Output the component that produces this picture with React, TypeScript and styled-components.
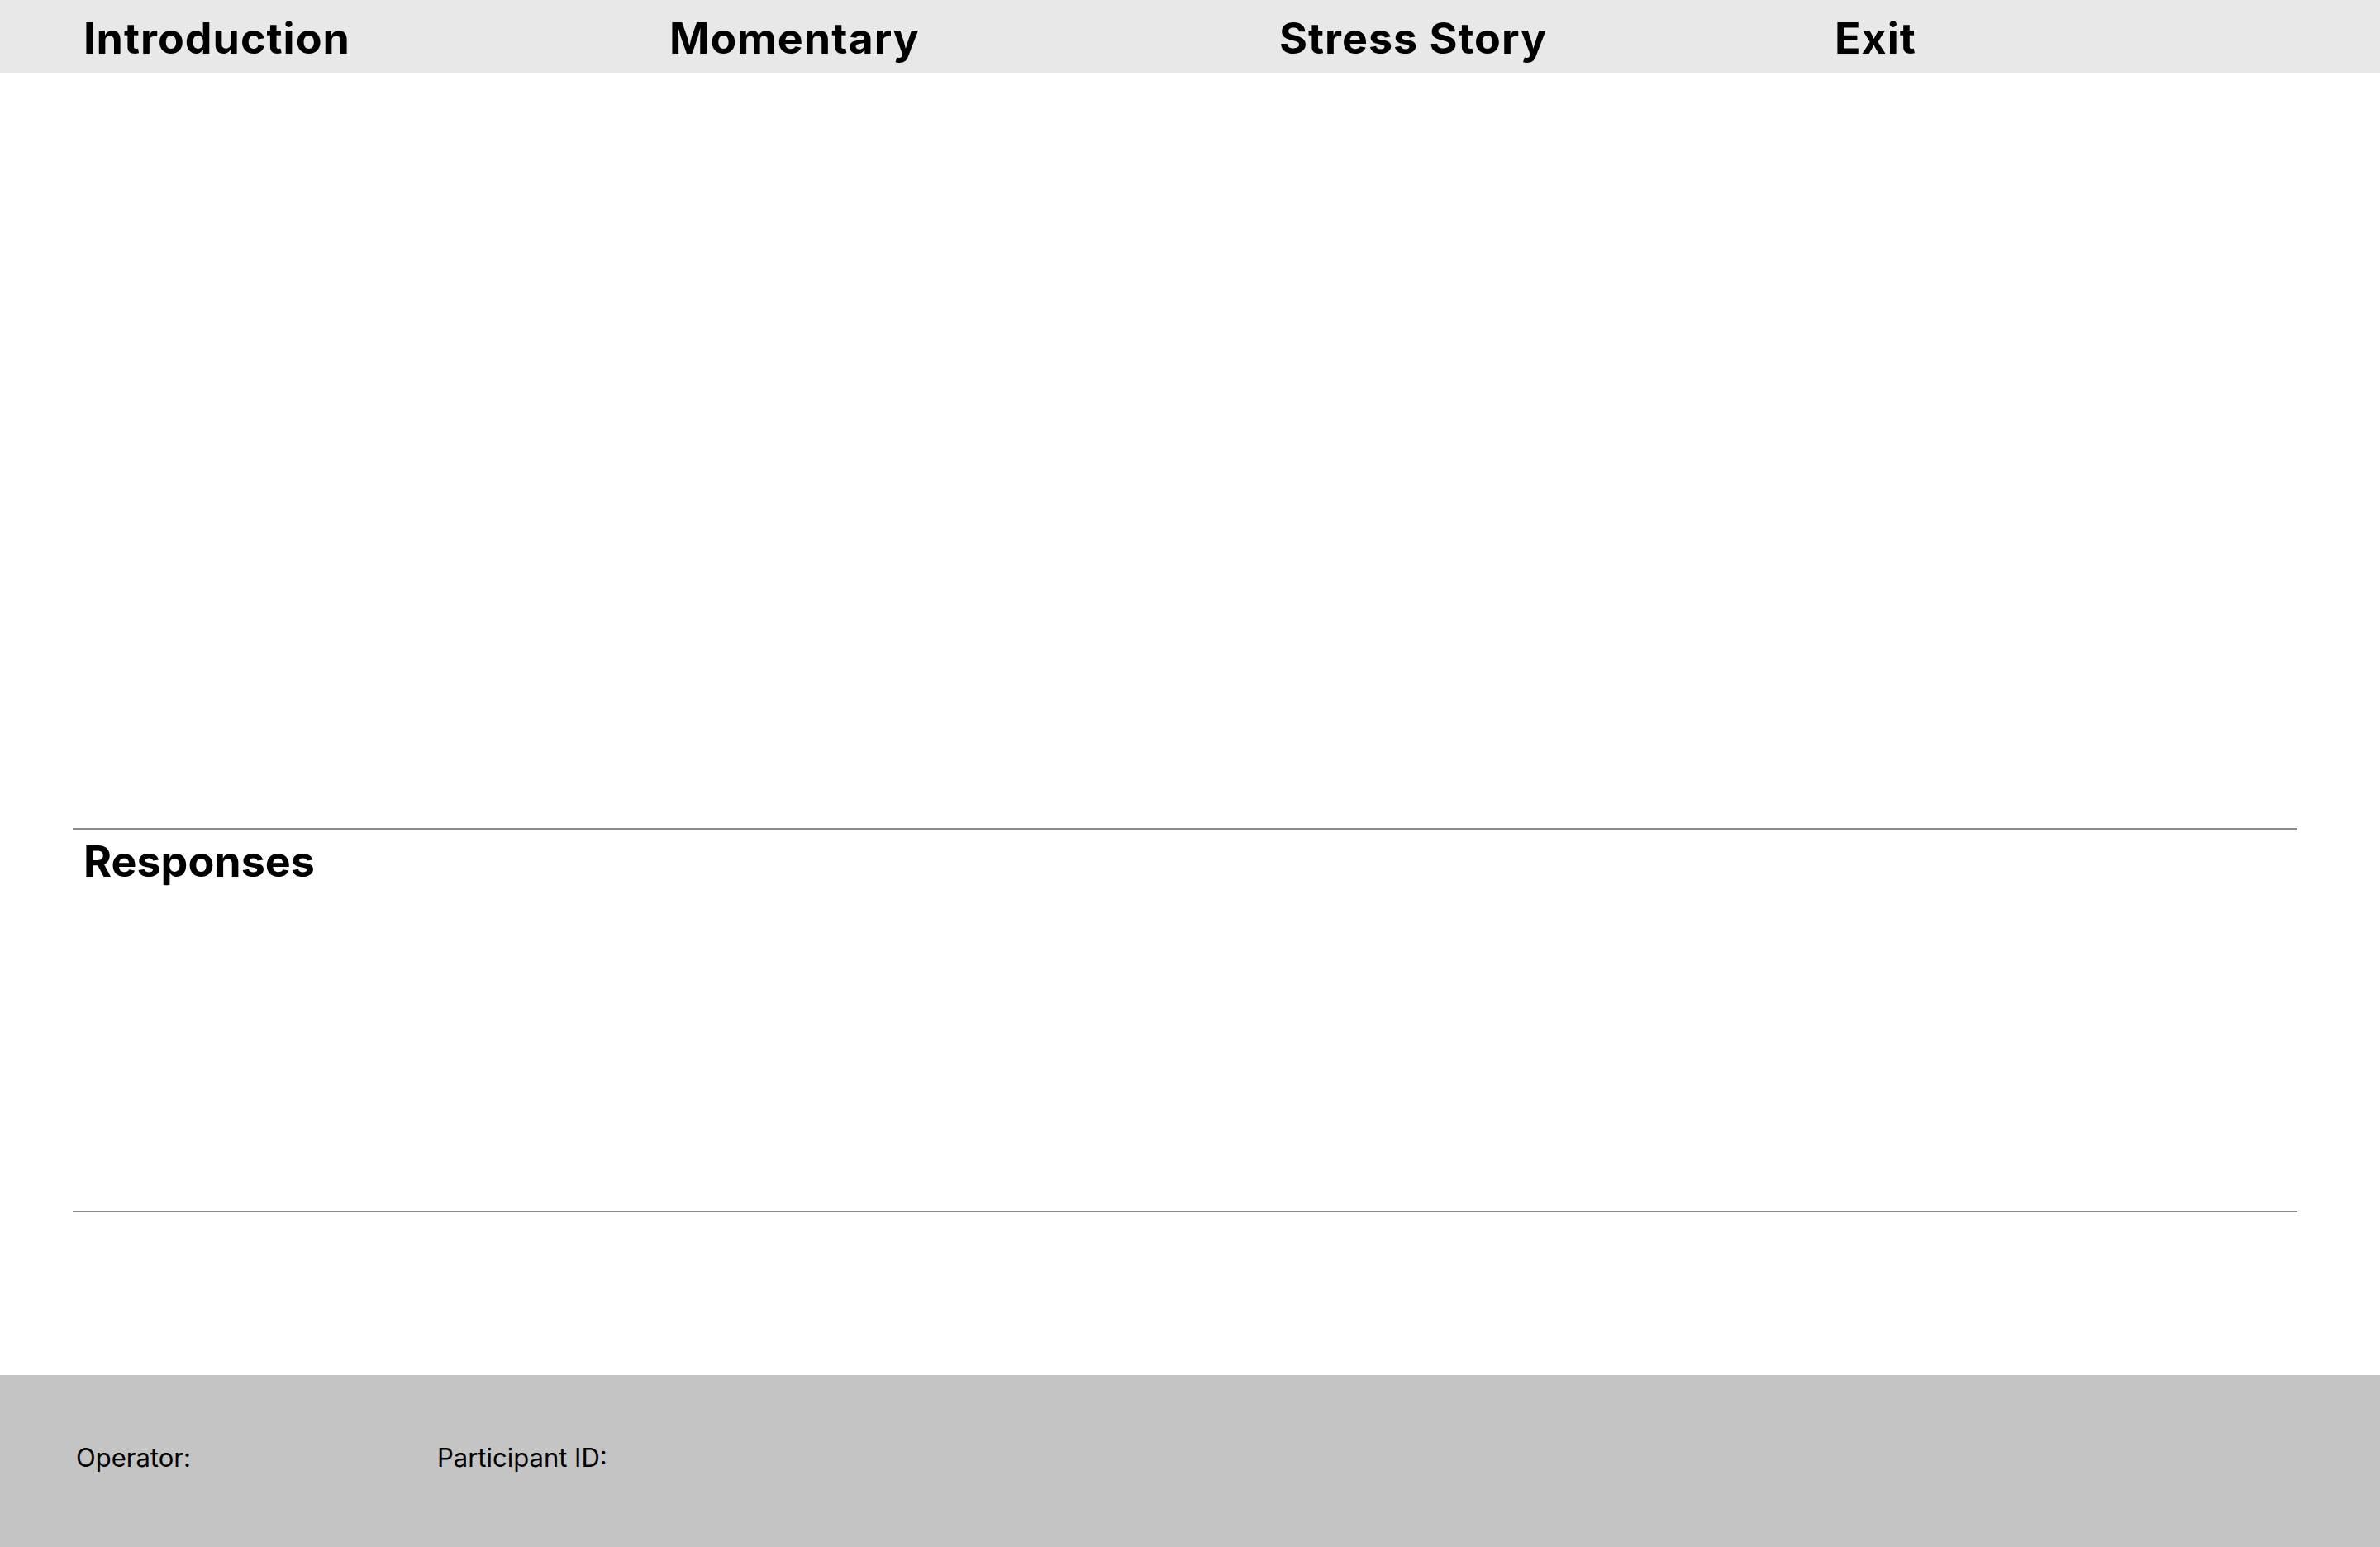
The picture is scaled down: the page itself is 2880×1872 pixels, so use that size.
import styled, { createGlobalStyle } from "styled-components";

const GlobalStyle = createGlobalStyle`
  html, body {
    margin: 0;
    padding: 0;
    background: #ffffff;
    font-family: Inter, "Noto Sans", sans-serif;
    color: #000000;
  }
`;

const tabs = [
  { label: "Introduction", width: 709 },
  { label: "Momentary", width: 738 },
  { label: "Stress Story", width: 672 },
  { label: "Exit", width: 400 },
];

const App = () => {
  return (
    <Page>
      <GlobalStyle />
      <NavBar>
        {tabs.map((t) => (
          <NavItem key={t.label} $width={t.width}>
            {t.label}
          </NavItem>
        ))}
      </NavBar>
      <Content />
      <Divider />
      <ResponsesSection>
        <SectionTitle>Responses</SectionTitle>
      </ResponsesSection>
      <Divider />
      <Spacer />
      <Footer>
        <FooterField $width={437}>Operator:</FooterField>
        <FooterField $width={400}>Participant ID:</FooterField>
      </Footer>
    </Page>
  );
};

export default App;

const Page = styled.div`
  display: flex;
  flex-direction: column;
  min-height: 100vh;
  width: 100%;
`;

const NavBar = styled.nav`
  display: flex;
  align-items: center;
  height: 88px;
  padding-left: 101px;
  background: #e8e8e8;
`;

const NavItem = styled.div<{ $width: number }>`
  width: ${({ $width }) => $width}px;
  font-family: Inter, "Noto Sans", sans-serif;
  font-size: 52px;
  font-weight: 700;
  letter-spacing: 1px;
  line-height: 1;
  margin-top: 5px;
`;

const Content = styled.main`
  height: 914px;
`;

const Divider = styled.hr`
  margin: 0 100px 0 88px;
  border: none;
  height: 2px;
  background: #8a8a8a;
`;

const ResponsesSection = styled.section`
  height: 461px;
  padding: 0 101px;
`;

const SectionTitle = styled.h2`
  margin: 0;
  padding-top: 13px;
  font-family: Inter, "Noto Sans", sans-serif;
  font-size: 52px;
  font-weight: 700;
  line-height: 1;
`;

const Spacer = styled.div`
  flex: 1;
`;

const Footer = styled.footer`
  display: flex;
  align-items: center;
  height: 208px;
  padding-left: 92px;
  background: #c4c4c4;
`;

const FooterField = styled.div<{ $width: number }>`
  width: ${({ $width }) => $width}px;
  font-family: Inter, "Noto Sans", sans-serif;
  font-size: 31px;
  font-weight: 400;
  margin-top: -10px;
`;
